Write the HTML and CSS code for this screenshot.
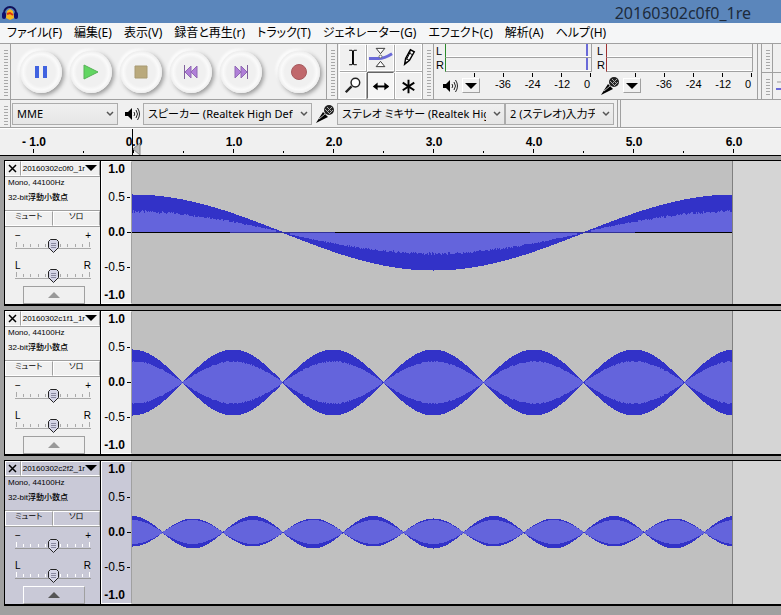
FILE: index.html
```html
<!DOCTYPE html>
<html lang="ja">

<head>
    <meta charset="UTF-8">
    <meta name="viewport" content="width=device-width, initial-scale=1.0">
    <title>20160302c0f0_1re</title>
    <link rel="stylesheet" href="styles.css">
</head>

<body>
    <svg class="defs" aria-hidden="true">
        <symbol id="speaker" viewBox="0 0 15 14">
            <path d="M0 5h3l4-4v12l-4-4H0z" fill="#000" />
            <path d="M9 5q1.500 2 0 4M11 3q3 4 0 8M12.500 1q4 6 0 12" fill="none" stroke="#222" />
        </symbol>
        <symbol id="mic" viewBox="0 0 20 20">
            <path d="M1 19L8 8l5 5z" fill="#000" />
            <path d="M4 15l6-5" stroke="#bbb" />
            <circle cx="14" cy="6" r="5" fill="#222" />
            <path d="M10 5l5 5M12 3l5 5M12 8l5-5M14 10l4-4" stroke="#aaa" />
        </symbol>
    </svg>

    <header class="titlebar">
        <svg class="logo" width="16" height="16" viewBox="0 0 16 16">
            <path d="M2 11V8a6 6 0 0 1 12 0v3" fill="none" stroke="#10105a" stroke-width="2" />
            <path d="M5 6l3-2 3 2 1 7-4 2-4-2z" fill="#f8b820" />
            <path d="M5 9l3-1 3 2" fill="none" stroke="#e03010" stroke-width="2" />
            <rect x="0" y="7" width="4" height="7" rx="2" fill="#10106e" />
            <rect x="12" y="7" width="4" height="7" rx="2" fill="#10106e" />
        </svg>
        <span class="doc-name">20160302c0f0_1re</span>
    </header>

    <nav class="menubar">
        <a href="#">ファイル(F)</a>
        <a href="#">編集(E)</a>
        <a href="#">表示(V)</a>
        <a href="#">録音と再生(r)</a>
        <a href="#">トラック(T)</a>
        <a href="#">ジェネレーター(G)</a>
        <a href="#">エフェクト(c)</a>
        <a href="#">解析(A)</a>
        <a href="#">ヘルプ(H)</a>
    </nav>

    <div class="toolbar main-tools">
        <div class="grip"></div>
        <div class="transport">
            <button class="round" aria-label="一時停止"><svg viewBox="0 0 16 16"><path d="M2 2h4v12H2zM10 2h4v12h-4z" fill="#4163e0" /></svg></button>
            <button class="round" aria-label="再生"><svg viewBox="0 0 16 16"><path d="M1 1l14 7-14 7z" fill="#62d662" stroke="#57b257" /></svg></button>
            <button class="round" aria-label="停止"><svg viewBox="0 0 16 16"><path d="M2 2h12v12H2z" fill="#b9a97c" stroke="#a89a72" /></svg></button>
            <button class="round" aria-label="先頭へ"><svg viewBox="0 0 16 16"><path d="M8 2v12L2 8zM14 2v12L8 8z" fill="#b07fd8" stroke="#9068b4" /><path d="M1.500 1v14" stroke="#80609c" /></svg></button>
            <button class="round" aria-label="末尾へ"><svg viewBox="0 0 16 16"><path d="M2 2v12l6-6zM8 2v12l6-6z" fill="#b07fd8" stroke="#9068b4" /><path d="M14.500 1v14" stroke="#80609c" /></svg></button>
            <button class="round record" aria-label="録音"><svg viewBox="0 0 16 16"><circle cx="8" cy="8" r="7.500" fill="#c0686c" stroke="#a65a5e" /></svg></button>
        </div>
        <div class="grip"></div>
        <div class="edit-tools">
            <button aria-label="選択ツール"><svg viewBox="0 0 26 26"><path d="M9.500 5.500h3l1 1 1-1h3M9.500 20.500h3l1-1 1 1h3" fill="none" stroke="#000" /><path d="M13.500 6v14" stroke="#000" stroke-width="2" /></svg></button>
            <button aria-label="エンベロープツール"><svg viewBox="0 0 26 26"><path d="M1 14h10q6 0 14-5" fill="none" stroke="#6a6ad8" stroke-width="3" /><path d="M8.500 3.500h9L13 9zM8.500 22.500h9L13 17z" fill="#fff" stroke="#333" /><circle cx="13" cy="12" r="1.500" fill="#fff" stroke="#666" /></svg></button>
            <button aria-label="描画ツール"><svg viewBox="0 0 26 26"><path d="M9 20l1-6 5-9 4 2-5 9z" fill="#fff" stroke="#000" stroke-width="1.500" /><path d="M13 8l4 2M10 14l4 2M15 7l-4 8" stroke="#000" /><path d="M9 20l1-3 2 1z" /></svg></button>
            <button aria-label="ズームツール"><svg viewBox="0 0 26 26"><circle cx="16" cy="10" r="4.500" fill="#fff" stroke="#222" stroke-width="1.500" /><path d="M12 14l-6 6" stroke="#222" stroke-width="2.500" /></svg></button>
            <button class="pressed" aria-label="タイムシフトツール"><svg viewBox="0 0 26 26"><path d="M7 14h14" stroke="#000" stroke-width="2" /><path d="M5 14l5-4v8zM22 14l-5-4v8z" /></svg></button>
            <button aria-label="マルチツール"><svg viewBox="0 0 26 26"><path d="M13 7v14M7 10l12 8M19 10L7 18" stroke="#000" stroke-width="2" /></svg></button>
        </div>
        <div class="grip"></div>
        <div class="meters">
            <div class="meter playback">
                <div class="channel"><span>L</span><div class="bar"></div></div>
                <div class="channel"><span>R</span><div class="bar"></div></div>
                <div class="meter-scale">
                    <svg class="meter-icon" width="15" height="14"><use href="#speaker" /></svg>
                    <button class="drop" aria-label="再生メーター"></button>
                    <div class="marks"><span>-36</span><span>-24</span><span>-12</span><span>0</span></div>
                </div>
            </div>
            <div class="meter capture">
                <div class="channel"><span>L</span><div class="bar"></div></div>
                <div class="channel"><span>R</span><div class="bar"></div></div>
                <div class="meter-scale">
                    <svg class="meter-icon" width="20" height="20"><use href="#mic" /></svg>
                    <button class="drop" aria-label="録音メーター"></button>
                    <div class="marks"><span>-36</span><span>-24</span><span>-12</span><span>0</span></div>
                </div>
            </div>
        </div>
        <div class="more-tools">
            <div class="more-row"><div class="grip"></div></div>
            <div class="more-row"><div class="grip"></div><svg width="8" height="12" viewBox="0 0 8 12"><path d="M4 2h4" stroke="#999" /><path d="M3 9h5" stroke="#6a6ad8" stroke-width="2" /></svg></div>
        </div>
    </div>

    <div class="toolbar device-tools">
        <div class="grip"></div>
        <select class="host" aria-label="ホスト">
            <option>MME</option>
        </select>
        <svg class="out-icon" width="15" height="14"><use href="#speaker" /></svg>
        <select class="output" aria-label="再生デバイス">
            <option>スピーカー (Realtek High Definition Audio)</option>
        </select>
        <svg class="in-icon" width="20" height="20"><use href="#mic" /></svg>
        <select class="input" aria-label="録音デバイス">
            <option>ステレオ ミキサー (Realtek High Definition Audio)</option>
        </select>
        <select class="channels" aria-label="録音チャンネル">
            <option>2 (ステレオ)入力チャンネル</option>
        </select>
        <div class="bar-end"></div>
    </div>

    <div class="timeline">
        <span>- 1.0</span><span>0.0</span><span>1.0</span><span>2.0</span><span>3.0</span><span>4.0</span><span>5.0</span><span>6.0</span>
        <svg class="cursor" width="9" height="26" viewBox="0 0 9 26"><path d="M8 14v12L1 20z" fill="#bbb" stroke="#888" /><path d="M0 0h1v26H0z" /></svg>
    </div>

    <main class="tracks">
        <section class="track">
            <div class="panel">
                <div class="panel-title">
                    <button class="close" aria-label="閉じる"><svg width="9" height="9" viewBox="0 0 9 9"><path d="M1 1l7 7M8 1L1 8" stroke="#000" stroke-width="1.500" /></svg></button>
                    <button class="track-menu">20160302c0f0_1r<i class="arrow"></i></button>
                </div>
                <div class="info">
                    <p>Mono, 44100Hz</p>
                    <p>32-bit<b>浮動小数点</b></p>
                </div>
                <div class="switches"><button>ミュート</button><button>ソロ</button></div>
                <label class="knob"><span>−</span><span>+</span><input type="range" aria-label="ゲイン"></label>
                <label class="knob"><span>L</span><span>R</span><input type="range" aria-label="パン"></label>
                <button class="fold" aria-label="折りたたむ"><i class="up"></i></button>
            </div>
            <div class="vruler"><b>1.0</b><span>0.5</span><b>0.0</b><span>-0.5</span><b>-1.0</b></div>
            <div class="clip"><svg class="wave" data-wave="single" width="600" height="143"></svg></div>
        </section>

        <section class="track">
            <div class="panel">
                <div class="panel-title">
                    <button class="close" aria-label="閉じる"><svg width="9" height="9" viewBox="0 0 9 9"><path d="M1 1l7 7M8 1L1 8" stroke="#000" stroke-width="1.500" /></svg></button>
                    <button class="track-menu">20160302c1f1_1r<i class="arrow"></i></button>
                </div>
                <div class="info">
                    <p>Mono, 44100Hz</p>
                    <p>32-bit<b>浮動小数点</b></p>
                </div>
                <div class="switches"><button>ミュート</button><button>ソロ</button></div>
                <label class="knob"><span>−</span><span>+</span><input type="range" aria-label="ゲイン"></label>
                <label class="knob"><span>L</span><span>R</span><input type="range" aria-label="パン"></label>
                <button class="fold" aria-label="折りたたむ"><i class="up"></i></button>
            </div>
            <div class="vruler"><b>1.0</b><span>0.5</span><b>0.0</b><span>-0.5</span><b>-1.0</b></div>
            <div class="clip"><svg class="wave" data-wave="beat" width="600" height="143"></svg></div>
        </section>

        <section class="track selected">
            <div class="panel">
                <div class="panel-title">
                    <button class="close" aria-label="閉じる"><svg width="9" height="9" viewBox="0 0 9 9"><path d="M1 1l7 7M8 1L1 8" stroke="#000" stroke-width="1.500" /></svg></button>
                    <button class="track-menu">20160302c2f2_1r<i class="arrow"></i></button>
                </div>
                <div class="info">
                    <p>Mono, 44100Hz</p>
                    <p>32-bit<b>浮動小数点</b></p>
                </div>
                <div class="switches"><button>ミュート</button><button>ソロ</button></div>
                <label class="knob"><span>−</span><span>+</span><input type="range" aria-label="ゲイン"></label>
                <label class="knob"><span>L</span><span>R</span><input type="range" aria-label="パン"></label>
                <button class="fold" aria-label="折りたたむ"><i class="up"></i></button>
            </div>
            <div class="vruler"><b>1.0</b><span>0.5</span><b>0.0</b><span>-0.5</span><b>-1.0</b></div>
            <div class="clip"><svg class="wave" data-wave="short" width="600" height="143"></svg></div>
        </section>
    </main>

    <script src="script.js"></script>
</body>

</html>
```

FILE: styles.css
```css
* {
    box-sizing: border-box;
}

body {
    margin: 0;
    min-height: 100vh;
    background-color: #a0a0a0;
    font-family: "Noto Sans", "Noto Sans CJK JP", sans-serif;
    font-size: 12px;
    color: #000;
    overflow-x: hidden;
}

button {
    padding: 0;
    border: none;
    background: none;
    font-family: inherit;
    color: inherit;
}

.defs {
    display: none;
}

/* title and menu */
.titlebar {
    display: flex;
    align-items: center;
    justify-content: space-between;
    height: 23px;
    padding: 2px 30px 0 2px;
    background-color: #5b86bb;
}

.doc-name {
    font-size: 16px;
    line-height: 20px;
    color: #1d2b3c;
}

.menubar {
    display: flex;
    gap: 12px;
    height: 21px;
    padding-left: 7px;
    background-color: #f5f6f7;
    border-bottom: 1px solid #a0a0a0;
}

.menubar a {
    color: #000;
    text-decoration: none;
    font-size: 12px;
    line-height: 20px;
    white-space: nowrap;
    font-feature-settings: "palt";
}

/* toolbars */
.toolbar {
    display: flex;
    background-color: #f0f0f0;
    border-bottom: 1px solid #a0a0a0;
}

.main-tools {
    height: 56px;
}

.grip {
    flex: none;
    width: 11px;
    border-right: 1px solid #a0a0a0;
    background: repeating-linear-gradient(#f0f0f0 0 2px, #a8a8a8 2px 3px) 4px 4px / 4px calc(100% - 6px) no-repeat;
}

.transport {
    display: flex;
    align-items: center;
    gap: 8px;
    width: 317px;
    padding-left: 9px;
    border-right: 1px solid #a0a0a0;
}

.round {
    display: flex;
    align-items: center;
    justify-content: center;
    width: 42px;
    height: 42px;
    border-radius: 50%;
    background: radial-gradient(circle, #f0f0f0 48%, #fafafa 60%, #ececec 72%);
    box-shadow: 2px 2px 4px #999, -2px -2px 3px #fff;
}

.round svg {
    width: 16px;
    height: 16px;
}

.record {
    margin-left: 8px;
}

.edit-tools {
    display: grid;
    grid-template-columns: repeat(3, 27px);
    grid-template-rows: repeat(2, 27px);
    gap: 1px;
    width: 85px;
    padding-left: 1px;
    border-right: 1px solid #a0a0a0;
}

.edit-tools button {
    border: 1px solid #fff;
    box-shadow: 1px 1px 0 #a8a8a8;
}

.edit-tools .pressed {
    border-color: #666 #fff #fff #666;
    background-color: #f6f6f6;
}

.edit-tools svg {
    display: block;
    width: 25px;
    height: 25px;
}

.meters {
    display: flex;
    width: 324px;
}

.meter {
    width: 161px;
    padding-left: 2px;
}

.channel {
    display: flex;
    height: 14px;
    font: 11px/14px "Liberation Sans", sans-serif;
}

.channel span {
    width: 9px;
}

.bar {
    width: 147px;
    height: 14px;
    border-bottom: 1px solid #a0a0a0;
    border-right: 1px solid #a0a0a0;
    border-left: 1px solid #2a8a2a;
    box-shadow: inset 0 -1px #fff;
}

.playback .bar {
    background: linear-gradient(#6a6ad8, #6a6ad8) right 3px top / 2px 100% no-repeat;
}

.capture .bar {
    border-left-color: #a03030;
}

.meter-scale {
    display: flex;
    align-items: center;
    height: 27px;
    background: repeating-linear-gradient(90deg, #000 0 1px, transparent 1px 29px) 38px 1px / 117px 4px no-repeat;
}

.meter-icon {
    flex: none;
    margin-left: 7px;
}

.capture .meter-icon {
    margin-left: 3px;
}

.drop {
    flex: none;
    display: flex;
    align-items: center;
    justify-content: center;
    width: 18px;
    height: 15px;
    margin-left: 4px;
    border: 1px solid #fff;
    border-right-color: #a0a0a0;
    border-bottom-color: #a0a0a0;
}

.capture .drop {
    margin-left: 3px;
}

.drop::before {
    content: "";
    border: 6px solid transparent;
    border-top-color: #000;
    border-bottom: none;
}

.marks {
    flex: 1;
    display: flex;
    justify-content: space-between;
    padding: 0 5px 4px 15px;
    font: 11px/14px "Liberation Sans", sans-serif;
}

.more-tools {
    flex: 1;
    border-left: 1px solid #a0a0a0;
    padding-left: 3px;
}

.more-row {
    display: flex;
    align-items: center;
    height: 28px;
    border-left: 1px solid #a0a0a0;
}

.more-row + .more-row {
    height: 27px;
    border-top: 1px solid #a0a0a0;
}

.more-row .grip {
    align-self: stretch;
}

.device-tools {
    align-items: center;
    height: 28px;
}

.device-tools .grip {
    align-self: stretch;
}

select {
    appearance: none;
    height: 22px;
    padding: 0 18px 0 4px;
    border: 1px solid #acacac;
    border-radius: 0;
    background: url("data:image/svg+xml,%3Csvg xmlns='http://www.w3.org/2000/svg' width='8' height='6'%3E%3Cpath d='M1 1l3 3 3-3' fill='none' stroke='%23555' stroke-width='1.5'/%3E%3C/svg%3E") right 3px center no-repeat, linear-gradient(#f0f0f0, #e6e6e6);
    font-family: inherit;
    font-size: 11px;
    color: #000;
    font-feature-settings: "palt";
    text-overflow: clip;
}

.host {
    width: 106px;
    margin-left: 1px;
}

.output {
    width: 169px;
    margin-left: 3px;
}

.input {
    width: 168px;
    margin-left: 2px;
}

.channels {
    width: 109px;
}

.out-icon {
    margin-left: 7px;
}

.in-icon {
    margin-left: 3px;
}

.bar-end {
    align-self: stretch;
    width: 4px;
    margin-left: 3px;
    border: 1px solid #a0a0a0;
    border-width: 0 1px;
}

/* time ruler, 100px per second */
.timeline {
    position: relative;
    display: flex;
    height: 28px;
    padding-left: 1px;
    border-top: 1px solid #fff;
    border-bottom: 1px solid #000;
    background-color: #f0f0f0;
    overflow: hidden;
    font: bold 12px/26px "Liberation Sans", sans-serif;
}

.timeline span {
    flex: none;
    width: 100px;
    padding-right: 34px;
    text-align: center;
    background:
        linear-gradient(#000, #000) 32px 20px / 1px 4px no-repeat,
        linear-gradient(#000, #000) 82px 22px / 1px 2px no-repeat;
}

.cursor {
    position: absolute;
    left: 132px;
    top: 0;
}

/* tracks */
.tracks {
    display: flex;
    flex-direction: column;
    gap: 4px;
    padding: 4px 0 0 4px;
}

.track {
    --face: #f0f0f0;
    display: flex;
    height: 146px;
    border: 1px solid #000;
    border-right: none;
    border-bottom-width: 2px;
    background-color: #d5d5d5;
    font: 8px/10px "Liberation Sans", "Noto Sans CJK JP", sans-serif;
}

.selected {
    --face: #c9c9d7;
}

.panel {
    display: flex;
    flex-direction: column;
    width: 96px;
    border-right: 1px solid #000;
    background-color: var(--face);
}

.panel-title,
.switches {
    display: flex;
    height: 16px;
    border-bottom: 1px solid #a0a0a0;
}

.close {
    display: flex;
    align-items: center;
    justify-content: center;
    width: 16px;
    border: 1px solid #fff;
    border-right-color: #a0a0a0;
}

.track-menu {
    flex: 1;
    display: flex;
    align-items: center;
    justify-content: space-between;
    padding: 0 2px 1px 1px;
    border: 1px solid #fff;
    border-right-color: #a0a0a0;
    font-size: 8px;
}

.arrow {
    border: 6px solid transparent;
    border-top-color: #000;
    border-bottom: none;
}

.info {
    height: 34px;
    padding: 1px 3px;
    border-bottom: 1px solid #a0a0a0;
}

.info p {
    margin: 0 0 5px;
    white-space: nowrap;
}

.info b {
    font-weight: 500;
}

.switches {
    margin-bottom: 2px;
}

.switches button {
    flex: 1;
    border: 1px solid #fff;
    border-right-color: #a0a0a0;
    padding-bottom: 4px;
    font-size: 8px;
    line-height: 9px;
    font-feature-settings: "palt";
}

.knob {
    display: grid;
    grid-template-columns: 1fr 1fr;
    height: 24px;
    margin: 0 9px 6px 10px;
    font-size: 10px;
    line-height: 14px;
}

.knob span {
    grid-area: 1 / 1;
}

.knob span + span {
    grid-area: 1 / 2;
    text-align: right;
}

.knob input {
    appearance: none;
    grid-area: 1 / 1 / 2 / 3;
    align-self: end;
    width: 76px;
    height: 14px;
    margin: 0;
    background: url("data:image/svg+xml,%3Csvg xmlns='http://www.w3.org/2000/svg' width='76' height='14' shape-rendering='crispEdges'%3E%3Cpath d='M1 3v5M8 5v3M15 5v3M23 5v3M30 5v3M45 5v3M52 5v3M60 5v3M67 5v3M74 3v5' stroke='%23aaa'/%3E%3Cpath d='M0 9h76' stroke='%23aaa'/%3E%3C/svg%3E") no-repeat;
}

.selected .knob input {
    background-image: url("data:image/svg+xml,%3Csvg xmlns='http://www.w3.org/2000/svg' width='76' height='14' shape-rendering='crispEdges'%3E%3Cpath d='M1 3v5M8 5v3M15 5v3M23 5v3M30 5v3M45 5v3M52 5v3M60 5v3M67 5v3M74 3v5' stroke='%23fff'/%3E%3Cpath d='M0 9h76' stroke='%23999'/%3E%3C/svg%3E");
}

.knob input::-webkit-slider-thumb {
    appearance: none;
    width: 11px;
    height: 14px;
    background: url("data:image/svg+xml,%3Csvg xmlns='http://www.w3.org/2000/svg' width='11' height='14'%3E%3Cpath d='M2.5.5h6l2 2v6l-5 5-5-5v-6z' fill='%23d4d4e6' stroke='%23222'/%3E%3Cpath d='M3 4.500h5M3 6.500h5M3 8.500h5' stroke='%238888a0'/%3E%3C/svg%3E") no-repeat;
}

.fold {
    display: flex;
    align-items: center;
    justify-content: center;
    width: 62px;
    height: 18px;
    margin: -3px 0 0 18px;
    border: 1px solid #a0a0a0;
}

.up {
    border: 6px solid transparent;
    border-top: none;
    border-bottom: 6px solid #999;
}

.selected .fold {
    border-top-color: #fff;
    border-left-color: #fff;
}

.selected .up {
    border-bottom-color: #555;
}

.vruler {
    display: grid;
    grid-template-rows: 18px 1fr 1fr 1fr 18px;
    width: 31px;
    border: 1px solid #fff;
    border-right-color: #a0a0a0;
    background-color: var(--face);
    font-size: 12px;
    line-height: 35px;
    text-align: right;
}

.vruler b,
.vruler span {
    padding-right: 6px;
}

.vruler b:first-child {
    line-height: 14px;
}

.vruler b:last-child {
    line-height: 20px;
}

.vruler b:nth-child(3),
.vruler span {
    background: linear-gradient(#000, #000) right 1px center / 3px 1px no-repeat;
}

.vruler b:nth-child(3) {
    background-size: 4px 1px;
    background-position: right 0 center;
}

.clip {
    width: 601px;
    border-right: 1px solid #808080;
    background-color: #c0c0c0;
}

.wave {
    display: block;
}
```

FILE: script.js
```js
const MIDDLE = 71;

// every shape returns [top, bottom, rms top, rms bottom] in pixels from the zero line
const shapes = {
    single: function (x) {
        const c = Math.cos(2 * Math.PI * x / 602);
        const rms = c * (20.5 + noise(x));
        return c > 0 ? [c * 37.5, 0, rms, 0] : [0, -c * 37.5, 0, -rms];
    },
    beat: function (x) {
        const c = Math.abs(Math.cos(Math.PI * x / 100.3));
        const rms = c * (20.5 + noise(x) / 2);
        return [c * 32.5, c * 32.5, rms, rms];
    },
    short: function (x) {
        const c = Math.cos(Math.PI * x / 60.2);
        const a = Math.abs(c);
        return c > 0 ? [a * 16, a * 13.5, a * 12, a * 11] : [a * 13.5, a * 15.5, a * 12, a * 11];
    }
};

function noise(x) {
    const n = Math.sin(x * 12.9898) * 43758.5453;
    return (n - Math.floor(n)) * 3 - 1.5;
}

function addPath(svg, d, color) {
    const path = document.createElementNS("http://www.w3.org/2000/svg", "path");
    path.setAttribute("d", d);
    path.setAttribute("fill", color);
    svg.appendChild(path);
}

document.querySelectorAll(".wave").forEach(svg => {
    const shape = shapes[svg.dataset.wave];
    let peak = "";
    let rms = "";
    for (let x = 0; x < 600; x++) {
        const [up, down, rmsUp, rmsDown] = shape(x).map(Math.round);
        peak += `M${x} ${MIDDLE - up}h1V${MIDDLE + down + 1}h-1z`;
        if (rmsUp + rmsDown > 1) {
            rms += `M${x} ${MIDDLE - rmsUp}h1V${MIDDLE + rmsDown + 1}h-1z`;
        }
    }
    addPath(svg, peak, "#3232c8");
    addPath(svg, rms, "#6464dc");
    if (svg.dataset.wave === "single") {
        addPath(svg, `M0 ${MIDDLE}h600v1H0z`, "#323296");
        addPath(svg, `M0 ${MIDDLE}h98v1H0zM203 ${MIDDLE}h195v1H203zM503 ${MIDDLE}h97v1H503z`, "#000");
    }
});
```
